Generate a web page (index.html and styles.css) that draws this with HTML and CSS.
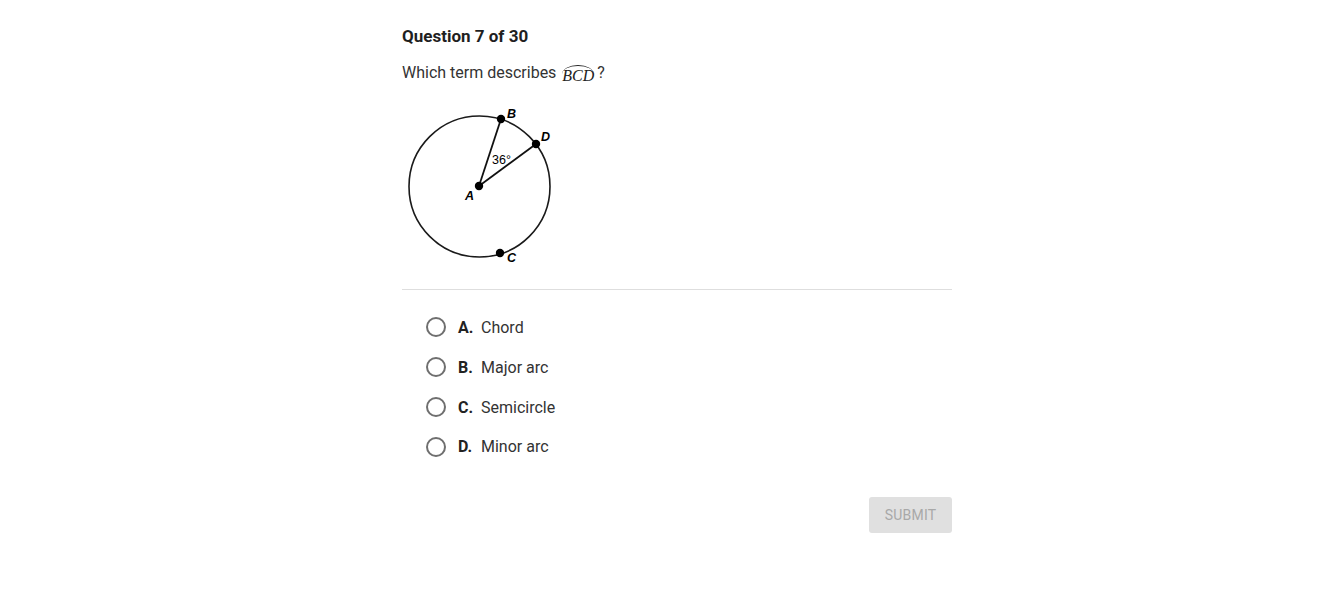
FILE: index.html
```html
<!DOCTYPE html>
<html>
<head>
<meta charset="utf-8">
<link rel="stylesheet" href="styles.css">
</head>
<body>
<main class="quiz">
  <h1 class="title">Question 7 of 30</h1>
  <p class="prompt">Which term describes <span class="arc">BCD</span>?</p>
  <div class="figure">
    <svg width="160" height="165" viewBox="0 0 160 165">
      <circle cx="77.5" cy="83.5" r="70.5" fill="none" stroke="#1a1a1a" stroke-width="1.6"/>
      <line x1="77" y1="83" x2="99" y2="16" stroke="#111" stroke-width="1.8"/>
      <line x1="77" y1="83" x2="134" y2="41" stroke="#111" stroke-width="1.8"/>
      <circle cx="77" cy="83" r="4.2" fill="#000"/>
      <circle cx="99" cy="16" r="4.2" fill="#000"/>
      <circle cx="134" cy="41" r="4.2" fill="#000"/>
      <circle cx="98" cy="150" r="4.2" fill="#000"/>
      <text x="105" y="15" class="lbl">B</text>
      <text x="139" y="38" class="lbl">D</text>
      <text x="63" y="97" class="lbl">A</text>
      <text x="105" y="159" class="lbl">C</text>
      <text x="90" y="61" class="deg">36°</text>
    </svg>
  </div>
  <hr class="divider">
  <ul class="options">
    <li class="option"><span class="radio"></span><span class="letter">A.</span><span class="text">Chord</span></li>
    <li class="option"><span class="radio"></span><span class="letter">B.</span><span class="text">Major arc</span></li>
    <li class="option"><span class="radio"></span><span class="letter">C.</span><span class="text">Semicircle</span></li>
    <li class="option"><span class="radio"></span><span class="letter">D.</span><span class="text">Minor arc</span></li>
  </ul>
  <div class="actions">
    <button class="submit">Submit</button>
  </div>
</main>
</body>
</html>
```

FILE: styles.css
```css
html, body {
  margin: 0;
  padding: 0;
  background: #fff;
}
body {
  font-family: Roboto, "Liberation Sans", Arial, sans-serif;
  color: #222;
}
.quiz {
  width: 550px;
  margin-left: 402px;
  padding-top: 26px;
  display: flex;
  flex-direction: column;
}
.title {
  margin: 0;
  font-size: 17px;
  line-height: 20px;
  font-weight: 700;
  color: #1f1f1f;
}
.prompt {
  margin: 17px 0 0 0;
  font-size: 16px;
  line-height: 20px;
  color: #333;
}
.arc {
  display: inline-block;
  position: relative;
  font-family: "Liberation Serif", "Times New Roman", serif;
  font-style: italic;
  font-size: 16px;
  margin-left: 2px;
  margin-right: 3px;
  padding-top: 2px;
  line-height: 16px;
  vertical-align: -3px;
  color: #222;
}
.arc::before {
  content: "";
  position: absolute;
  left: 0;
  right: 0;
  top: -1px;
  height: 8px;
  border-top: 1px solid #222;
  border-radius: 50% 50% 0 0 / 100% 100% 0 0;
}
.figure {
  margin-top: 19px;
  height: 165px;
}
.figure svg {
  display: block;
}
.lbl {
  font-family: "Liberation Sans", Arial, sans-serif;
  font-weight: 700;
  font-style: italic;
  font-size: 12.5px;
  fill: #000;
}
.deg {
  font-family: "Liberation Sans", Arial, sans-serif;
  font-size: 12.5px;
  fill: #000;
}
.divider {
  margin: 21px 0 0 0;
  border: 0;
  border-top: 1px solid #dedede;
  height: 0;
}
.options {
  list-style: none;
  margin: 17px 0 0 0;
  padding: 0;
  display: flex;
  flex-direction: column;
}
.option {
  height: 40px;
  display: flex;
  align-items: center;
  padding-left: 24px;
  font-size: 16px;
  color: #333;
}
.option:nth-child(4) {
  height: 39px;
}
.radio {
  width: 16px;
  height: 16px;
  border: 2px solid #6f6f6f;
  border-radius: 50%;
  flex: none;
}
.letter {
  font-weight: 700;
  margin-left: 12px;
  width: 23px;
  color: #222;
}
.text {
  color: #333;
}
.actions {
  display: flex;
  justify-content: flex-end;
  margin-top: 31px;
}
.submit {
  width: 83px;
  height: 36px;
  border: 0;
  border-radius: 3px;
  background: #e0e0e0;
  color: #a8a8a8;
  font-family: Roboto, "Liberation Sans", Arial, sans-serif;
  font-size: 14px;
  text-transform: uppercase;
  letter-spacing: 0.2px;
  padding: 0;
}
```
